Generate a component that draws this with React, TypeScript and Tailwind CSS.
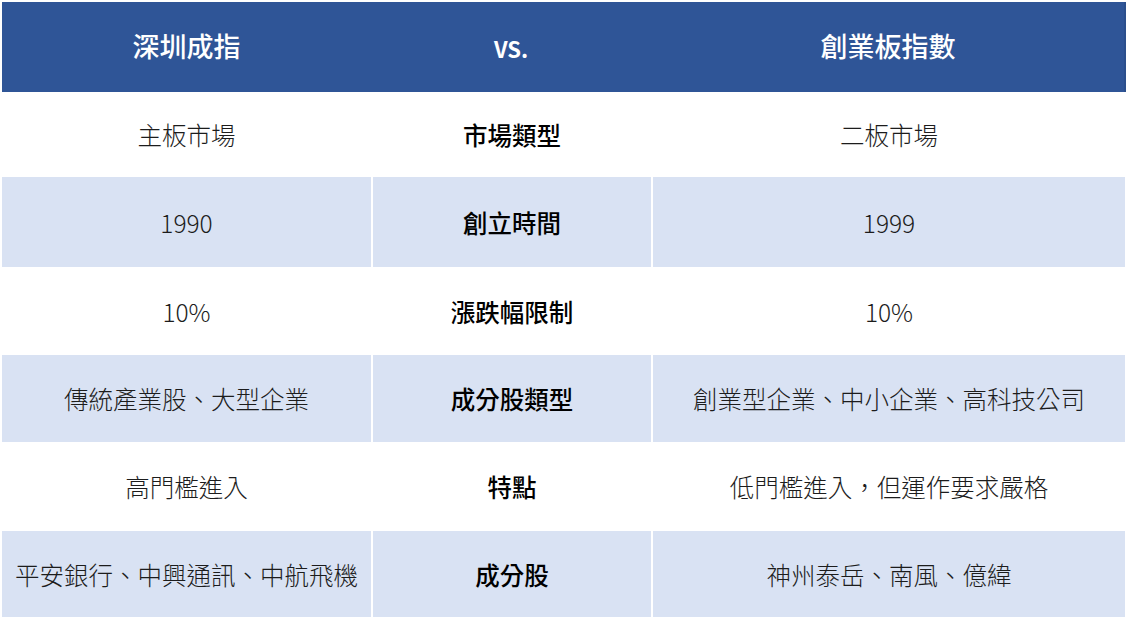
const rows: [string, string, string][] = [
  ["主板市場", "市場類型", "二板市場"],
  ["1990", "創立時間", "1999"],
  ["10%", "漲跌幅限制", "10%"],
  ["傳統產業股、大型企業", "成分股類型", "創業型企業、中小企業、高科技公司"],
  ["高門檻進入", "特點", "低門檻進入，但運作要求嚴格"],
  ["平安銀行、中興通訊、中航飛機", "成分股", "神州泰岳、南風、億緯"],
];

const heights = ["h-[85px]", "h-[90px]", "h-[88px]", "h-[87px]", "h-[89px]", "h-[86px]"];

export default function App() {
  return (
    <div
      className="w-[1128px] h-[619px] bg-white pt-[2px] pl-[2px] overflow-hidden"
      style={{ fontFamily: '"Noto Sans CJK TC", "Liberation Sans", sans-serif' }}
    >
      <div className="grid grid-cols-[369px_280px_474px] h-[90px] w-[1124px] bg-[#2f5597] border-r-2 border-[#2b4f8c] text-white font-medium">
        <div className="flex items-center justify-center text-[27px] pb-[2px]">深圳成指</div>
        <div className="flex items-center justify-center text-[22px] pt-[2px] font-bold">VS.</div>
        <div className="flex items-center justify-center text-[27px] pb-[2px]">創業板指數</div>
      </div>
      {rows.map((r, i) => {
        const shaded = i % 2 === 1;
        const cell = shaded ? "bg-[#d9e2f3]" : "bg-white";
        return (
          <div
            key={i}
            className={`grid grid-cols-[369px_278px_472px] gap-x-[2px] w-[1123px] ${heights[i]} text-[24.5px] text-[#1c1c1c]`}
          >
            <div className={`${cell} flex items-center justify-center pt-[2px] font-light`}>{r[0]}</div>
            <div className={`${cell} flex items-center justify-center pt-[2px] font-medium text-black`}>{r[1]}</div>
            <div className={`${cell} flex items-center justify-center pt-[2px] font-light`}>{r[2]}</div>
          </div>
        );
      })}
    </div>
  );
}
